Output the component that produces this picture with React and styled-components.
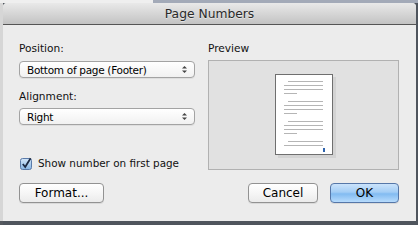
import styled, { createGlobalStyle } from 'styled-components';

const Global = createGlobalStyle`
  html, body {
    margin: 0;
    padding: 0;
  }
  body {
    font-family: "DejaVu Sans", "Liberation Sans", sans-serif;
    color: #111;
  }
`;

// the desktop strips that show round the sheet
const Desktop = styled.div`
  display: flex;
  box-sizing: border-box;
  width: 418px;
  height: 225px;
  padding: 3px 2px 4px 3px;
  background:
    linear-gradient(to right, #efefef 0 153px, #a3aab8 153px) top left / 100% 3px no-repeat,
    linear-gradient(to bottom, #d6d6d6 0 221px, #55595f 221px) top left / 3px 100% no-repeat,
    #4f555d;
`;

const Window = styled.div`
  flex: 1;
  display: flex;
  flex-direction: column;
  background: #ececec;
  border-radius: 4px 4px 0 0;
  overflow: hidden;
`;

const TitleBar = styled.div`
  flex: none;
  height: 21px;
  display: flex;
  align-items: center;
  justify-content: center;
  background: linear-gradient(#e9e9e9, #c3c3c3);
  border-bottom: 1px solid #555;
  font-size: 12.3px;
  color: #2a2a2a;
  text-shadow: 0 1px 0 rgba(255, 255, 255, 0.5);
`;

const Content = styled.div`
  flex: 1;
  display: flex;
  flex-direction: column;
  padding: 16px 17px 18px 16px;
`;

const Top = styled.div`
  display: grid;
  grid-template-columns: 176px 191px;
  column-gap: 13px;
`;

const Column = styled.div`
  display: flex;
  flex-direction: column;
`;

const Label = styled.div`
  height: 14px;
  line-height: 14px;
  font-size: 10.6px;
  margin-top: ${(p) => p.$top || 0}px;
`;

const Popup = styled.div`
  box-sizing: border-box;
  height: 17px;
  margin-top: ${(p) => p.$top || 0}px;
  display: flex;
  align-items: center;
  justify-content: space-between;
  padding: 0 7px 0 7px;
  border: 1px solid #a3a3a3;
  border-radius: 4px;
  background: linear-gradient(#ffffff, #f1f1f1);
  box-shadow: 0 1px 0 rgba(0, 0, 0, 0.06);
  font-size: 10.5px;
  letter-spacing: -0.3px;
  color: #000;
`;

const Check = styled.label`
  display: flex;
  align-items: center;
  gap: 5px;
  height: 14px;
  margin-top: 31px;
  padding-left: 1px;
  font-size: 10.4px;
`;

const PreviewBox = styled.div`
  box-sizing: border-box;
  height: 110px;
  margin-top: 5px;
  display: flex;
  align-items: center;
  justify-content: center;
  background: #e1e1e1;
  border: 1px solid #b1b1b1;
  padding: 1px 0 0 3px;
`;

const Footer = styled.div`
  display: flex;
  align-items: center;
  gap: 12px;
  margin-top: 13px;
`;

const Button = styled.button`
  box-sizing: border-box;
  width: ${(p) => p.$w}px;
  height: 20px;
  padding: 0;
  border: 1px solid ${(p) => (p.$primary ? '#5677a8' : '#929292')};
  border-radius: 4px;
  background: ${(p) =>
    p.$primary
      ? 'linear-gradient(#cbe3fb 0%, #a3cdf5 45%, #82bbf1 55%, #b7dbfc 100%)'
      : 'linear-gradient(#ffffff 0%, #f6f6f6 50%, #ebebeb 100%)'};
  box-shadow: 0 1px 0 rgba(0, 0, 0, 0.08);
  font-family: "DejaVu Sans", "Liberation Sans", sans-serif;
  font-size: 12px;
  color: #000;
`;

const Spacer = styled.div`
  flex: 1;
`;

const Arrows = () => (
  <svg width="5" height="7" viewBox="0 0 5 7">
    <path d="M0 2.6 L2.5 0 L5 2.6 Z" fill="#444" />
    <path d="M0 4.4 L2.5 7 L5 4.4 Z" fill="#444" />
  </svg>
);

const CheckMark = () => (
  <svg width="13" height="13" viewBox="0 0 13 13">
    <defs>
      <linearGradient id="cbfill" x1="0" y1="0" x2="0" y2="1">
        <stop offset="0" stopColor="#d3e6f9" />
        <stop offset="1" stopColor="#86b5e4" />
      </linearGradient>
    </defs>
    <rect x="0.5" y="1.5" width="11" height="11" rx="2" fill="url(#cbfill)" stroke="#5a7aa8" />
    <path d="M2.8 7 L5.2 10 L10.6 1.2" fill="none" stroke="#1c2a43" strokeWidth="1.8" />
  </svg>
);

// thumbnail of the page with its number in the footer
const PageThumb = () => {
  const groups = [7, 27, 47, 67];
  return (
    <svg width="61" height="84" viewBox="0 0 61 84">
      <rect x="3" y="3" width="58" height="81" fill="#d3d3d3" />
      <rect x="0.5" y="0.5" width="57" height="80" fill="#fff" stroke="#6f6f6f" />
      {groups.map((y, i) => (
        <g key={y} fill="#b5b5b5">
          <rect x="13" y={y} width="35" height="1" />
          <rect x="9" y={y + 4} width="39" height="1" />
          {i < 3 && <rect x="9" y={y + 8} width="39" height="1" />}
          {i < 3 && <rect x="9" y={y + 12} width="13" height="1" />}
        </g>
      ))}
      <rect x="48" y="74" width="2" height="4" fill="#2f64ad" />
    </svg>
  );
};

export default function App() {
  return (
    <>
      <Global />
      <Desktop>
        <Window>
          <TitleBar>Page Numbers</TitleBar>
          <Content>
            <Top>
              <Column>
                <Label>Position:</Label>
                <Popup $top={6}>
                  <span>Bottom of page (Footer)</span>
                  <Arrows />
                </Popup>
                <Label $top={11}>Alignment:</Label>
                <Popup $top={5}>
                  <span>Right</span>
                  <Arrows />
                </Popup>
                <Check>
                  <CheckMark />
                  Show number on first page
                </Check>
              </Column>
              <Column>
                <Label>Preview</Label>
                <PreviewBox>
                  <PageThumb />
                </PreviewBox>
              </Column>
            </Top>
            <Footer>
              <Button $w={85}>Format...</Button>
              <Spacer />
              <Button $w={70}>Cancel</Button>
              <Button $w={69} $primary>OK</Button>
            </Footer>
          </Content>
        </Window>
      </Desktop>
    </>
  );
}
